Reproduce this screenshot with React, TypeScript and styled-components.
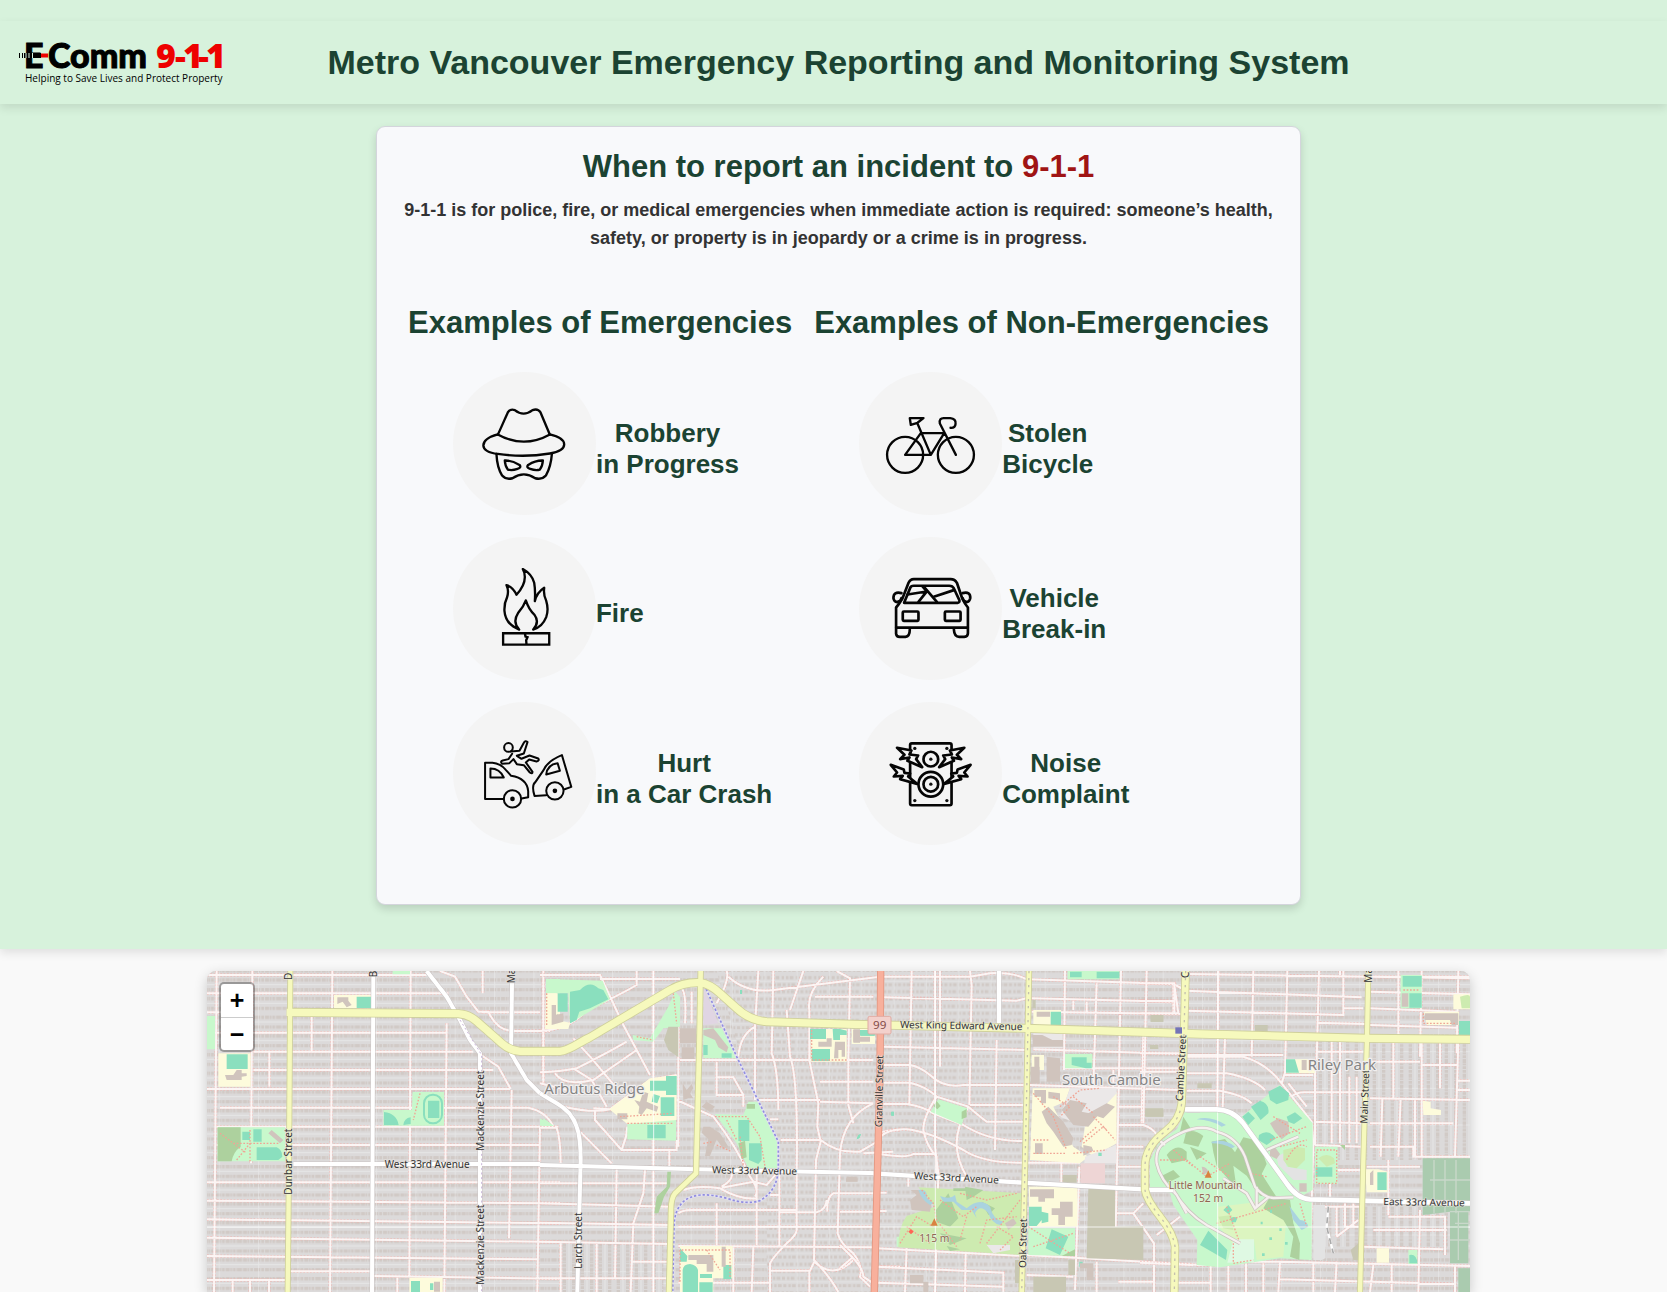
import React from "react";
import styled, { createGlobalStyle } from "styled-components";

const GlobalStyle = createGlobalStyle`
  * { box-sizing: border-box; }
  body {
    margin: 0;
    background: #f9f9f9;
    color: #333;
    font-family: "Liberation Sans", Arial, sans-serif;
  }
  h1, h2, p, ul { margin: 0; padding: 0; }
`;

const Page = styled.div`
  display: flex;
  flex-direction: column;
  height: 100vh;
  min-height: 1100px;
  overflow: hidden;
`;

const Hero = styled.div`
  padding: 21px 0 44px;
  background: #d7f2dc;
  box-shadow: 0 4px 9px rgba(0, 0, 0, 0.1);
`;

const Header = styled.header`
  display: grid;
  grid-template-columns: 230px 1fr 220px;
  align-items: center;
  height: 83px;
  box-shadow: 0 4px 9px rgba(0, 0, 0, 0.1);
`;

const LogoLink = styled.a`
  display: block;
  height: 48px;
  padding-left: 18px;
`;

const Title = styled.h1`
  padding-bottom: 2px;
  color: #1b4332;
  font-size: 34px;
  line-height: 40px;
  text-align: center;
`;

const CardArea = styled.div`
  padding-left: 10px;
`;

const Card = styled.section`
  width: 925px;
  max-width: calc(100% - 40px);
  margin: 22px auto 0;
  padding: 22px 20px 59px;
  border: 1px solid #d4d5dc;
  border-radius: 9px;
  background: #f8f9fb;
  box-shadow: 0 4px 9px rgba(0, 0, 0, 0.14);
`;

const Heading = styled.h2`
  color: #1b4332;
  font-size: 31px;
  line-height: 36px;
  text-align: center;
  white-space: nowrap;
`;

const Emphasis = styled.span`
  color: #a01414;
`;

const Lead = styled.p`
  margin-top: 11px;
  font-size: 18px;
  font-weight: bold;
  line-height: 28px;
  text-align: center;
`;

const Columns = styled.div`
  display: flex;
  flex-wrap: wrap;
  justify-content: center;
  gap: 22px;
  margin-top: 53px;
`;

const ExampleList = styled.ul`
  display: flex;
  flex-direction: column;
  gap: 22px;
  margin-top: 31px;
  padding-left: 45px;
  list-style: none;
`;

const ExampleItem = styled.li`
  display: flex;
  align-items: center;
`;

const IconCircle = styled.div`
  width: 143px;
  height: 143px;
  border-radius: 50%;
  background: #f4f4f4;
`;

const IconDrawing = styled.svg<{ $weight?: number }>`
  display: block;
  width: 100%;
  height: 100%;
  fill: none;
  stroke: #050505;
  stroke-width: ${({ $weight = 7 }) => $weight};
  stroke-linejoin: round;
  stroke-linecap: round;
`;

const ExampleLabel = styled.span`
  padding-top: 10px;
  color: #1b4332;
  font-size: 26px;
  font-weight: bold;
  line-height: 31px;
  text-align: center;
  white-space: pre-line;
`;

const MapFrame = styled.main`
  position: relative;
  flex: 1;
  min-height: 0;
  margin: 22px 197px 0 207px;
  border-radius: 9px 9px 0 0;
  background: #dddada;
  box-shadow: 0 4px 13px rgba(0, 0, 0, 0.2);
  overflow: hidden;
`;

const MapDrawing = styled.svg`
  display: block;
  width: 100%;
  height: 100%;
  fill: none;
`;

const ZoomControl = styled.div`
  position: absolute;
  top: 11px;
  left: 12px;
  display: flex;
  flex-direction: column;
  border: 2px solid rgba(0, 0, 0, 0.3);
  border-radius: 5px;
  background: #fff;
  background-clip: padding-box;
`;

const ZoomButton = styled.button`
  display: block;
  width: 32px;
  height: 33px;
  padding: 0;
  border: 0;
  background: transparent;
  color: #000;
  font: bold 25px/33px "Liberation Sans", Arial, sans-serif;
  & + & { border-top: 1px solid #ccc; }
`;

const Logo = () => (
  <svg width="212" height="48" viewBox="0 0 212 48" role="img" aria-label="E-Comm 9-1-1">
    <g fontFamily="Lato, sans-serif" fontWeight="900" fontSize="34">
      <text x="6" y="29" fill="#000" stroke="#000">E</text>
      <text x="30" y="29" fill="#000" stroke="#000">Comm</text>
    </g>
    <text x="138 157 165 180 188" y="29" fill="#ee0000" fontFamily="'Noto Sans', sans-serif" fontWeight="900" fontSize="34">9-1-1</text>
    <path d="M23 16.500h7" stroke="#ee0000" strokeWidth="4" />
    <path d="M1.500 14v5M4.500 14v5" stroke="#000" strokeWidth="1" />
    <path d="M6 16.500h17" stroke="#000" strokeWidth="5" />
    <path d="M8 14v5M11 14v5M14.500 14v5" stroke="#d7f2dc" strokeWidth="1" />
    <text x="7" y="43" fill="#000" fontFamily="'Open Sans', sans-serif" fontSize="10" fontWeight="500">
      Helping to Save Lives and Protect Property
    </text>
  </svg>
);

const RobberyIcon = () => (
  <IconDrawing viewBox="42 36 428 428">
    <path d="M176 224C184 207 197 177 206 157Q213 145 227 150Q253 171 280 150Q296 144 304 157L332 224" />
    <path d="M176 223C118 239 119 276 176 281Q253 293 332 280C390 270 388 236 332 223Q254 266 176 223" />
    <path d="M172 281Q174 322 189 346Q200 359 220 354Q254 331 288 354Q309 359 320 346Q335 320 338 281" />
    <path d="M197 301Q218 300 241 314Q248 322 235 326Q218 332 206 328Q198 318 197 301M311 301Q290 300 267 314Q260 322 273 326Q290 332 302 328Q310 318 311 301" />
  </IconDrawing>
);

const FireIcon = () => (
  <IconDrawing viewBox="42 531 428 428">
    <path d="M240 808Q199 792 196 752Q195 729 204 711Q210 692 202 675Q222 681 232 704Q257 677 257 651Q257 636 251 627Q278 642 285 668Q289 691 287 723Q293 697 315 683Q312 704 321 722Q329 748 321 771Q309 801 282 808Q302 786 286 764Q269 749 260 721Q253 741 237 758Q219 786 240 808" />
    <path d="M192 819h138v34H192zM257 819l2 10 6 2-4 9 1 13" strokeLinejoin="miter" />
  </IconDrawing>
);

const CrashIcon = () => (
  <IconDrawing viewBox="42 36 428 428" $weight={6}>
    <path d="M194 326H138V218H160Q184 220 200 239L216 257Q264 265 267 303V321L247 325" />
    <path d="M154 235Q182 235 194 262H154z" />
    <circle cx="220" cy="326" r="26" /><circle cx="220" cy="326" r="4" fill="#111" />
    <path d="M321 315L286 317Q276 285 289 275L313 240Q324 213 368 195L396 290L376 297" />
    <path d="M321 253Q324 223 355 219L362 242z" />
    <circle cx="347" cy="302" r="26" /><circle cx="347" cy="302" r="4" fill="#111" />
    <circle cx="208" cy="172" r="13" />
    <path d="M215 184L241 182 254 158Q258 150 265 156L254 190 233 197 247 206 271 196 297 205Q302 211 292 214L270 208 260 217 280 245Q280 253 272 247L254 225 233 222 223 207 211 219 189 221Q182 214 191 211L208 207 219 191" />
  </IconDrawing>
);

const BicycleIcon = () => (
  <IconDrawing viewBox="54 36 428 428">
    <circle cx="192" cy="284" r="54" /><circle cx="344" cy="284" r="54" />
    <path d="M192 284L239 219H309L269 284L229 190M192 284H269M344 284L296 190Q293 173 309 174H327Q345 176 343 191Q342 204 328 203M206 174H247L229 188 209 194z" />
  </IconDrawing>
);

const CarIcon = () => (
  <IconDrawing viewBox="54 531 428 428" $weight={8}>
    <path d="M165 802V742Q173 733 184 715L202 669Q207 657 218 657H328Q341 657 347 668L363 715Q370 730 380 742V802z" />
    <path d="M189 728L207 684Q209 677 218 677H324Q334 677 338 685L354 719Q357 727 349 728z" />
    <path d="M181 699Q157 693 157 714Q159 726 168 726Q180 723 181 714M364 699Q388 693 387 714Q385 726 376 726Q366 723 364 714" />
    <path d="M165 803V821Q166 830 176 830H193Q206 829 206 808M338 808Q339 830 354 830H369Q380 829 380 819V803" />
    <rect x="185" y="754" width="47" height="28" rx="3" /><rect x="311" y="754" width="47" height="28" rx="3" />
    <path d="M244 679L257 694 199 703M257 694L232 725M251 683L287 725M278 710L338 690" />
  </IconDrawing>
);

const NoiseIcon = () => (
  <IconDrawing viewBox="54 36 428 428" $weight={8}>
    <rect x="207" y="160" width="124" height="185" rx="5" />
    <g fill="#f4f4f4">
      <path d="M168 173L211 181 205 193 231 196 225 207 243 231 199 212 205 202 177 207 190 194zM369 173L326 181 332 193 306 196 312 207 294 231 338 212 332 202 360 207 347 194z" />
      <path d="M149 224L188 238 190 248 207 250 201 259 228 281 177 267 185 257 158 259 168 247zM388 224L349 238 347 248 330 250 336 259 309 281 360 267 352 257 379 259 369 247z" />
    </g>
    <g fill="#f4f4f4"><circle cx="269" cy="207" r="22" /><circle cx="269" cy="282" r="37" /><circle cx="269" cy="282" r="22" /></g>
    <g fill="#111" stroke="none"><circle cx="269" cy="207" r="5" /><circle cx="269" cy="282" r="5" /><circle cx="221" cy="175" r="5" /><circle cx="317" cy="175" r="5" /><circle cx="221" cy="331" r="5" /><circle cx="317" cy="331" r="5" /></g>
  </IconDrawing>
);

type Example = { label: string; Icon: () => React.JSX.Element };

const emergencies: Example[] = [
  { label: "Robbery\nin Progress", Icon: RobberyIcon },
  { label: "Fire", Icon: FireIcon },
  { label: "Hurt\nin a Car Crash", Icon: CrashIcon },
];

const nonEmergencies: Example[] = [
  { label: "Stolen\nBicycle", Icon: BicycleIcon },
  { label: "Vehicle\nBreak-in", Icon: CarIcon },
  { label: "Noise\nComplaint", Icon: NoiseIcon },
];

const Examples = ({ title, items }: { title: string; items: Example[] }) => (
  <div>
    <Heading>{title}</Heading>
    <ExampleList>
      {items.map(({ label, Icon }) => (
        <ExampleItem key={label}>
          <IconCircle><Icon /></IconCircle>
          <ExampleLabel>{label}</ExampleLabel>
        </ExampleItem>
      ))}
    </ExampleList>
  </div>
);

/* Map data: the city is split in four sheets, each placed by its own x offset. */
const sheets = [0, 1020, 1920, 2820];

const localRoads = [
  // Dunbar
  `M21 45H680M21 100H745M150 157H21M21 218H738M160 275H820M160 330H880M21 387H930M60 443H985Q1040 455 1060 500M50 500H1075M50 555H1020M21 667H1080M21 722L1080 730M21 778L1080 790M21 833L1080 846M21 888L1012 898M520 948L1080 956M21 960H263M270 934H516
   M50 33L42 996M157 33L153 610M208 275V380M397 33L390 996M335 170V275M632 33L628 950M740 190L733 996M848 33V100M1030 33V370M935 390L927 835M1020 500L1012 996M98 960V996M150 960V996M207 960V996M592 950V996
   M720 33L765 50 800 110 835 155H865Q890 210 935 213H1050M843 285L895 320 932 387M845 157H1020`,
  // Arbutus Ridge
  `M0 213Q90 208 140 150Q230 110 290 75V33M0 45H180L250 195 330 345M180 57H420M0 337Q60 335 110 325Q200 280 260 245M10 60V360M45 340Q70 380 160 360L290 270M100 235L155 295 230 385M100 325L155 360 200 440M160 445L210 448 330 360 410 345M120 400L0 370M70 440Q160 460 210 448M165 450V480L245 570H410V540M245 570L258 530 262 500M120 515L215 610M0 503H50Q62 540 62 610M415 200V560M425 85Q440 100 435 190M455 95V190M420 300H1000M410 420L520 470Q590 560 630 650Q660 690 645 710M340 33V996
   M388 570V620M230 625L225 955M315 630L310 700 280 790 272 996M0 730L390 740M0 670H390M0 788L390 795M0 845L390 852M0 955H390M62 845V996M170 850V996M275 905H390M430 690Q470 675 540 685Q600 720 650 715M545 680Q580 660 575 640M545 683L640 665 680 675 710 640M415 760Q430 748 460 750H770M415 800H1000M415 858L1000 862M530 730V855M580 860V996M640 860L635 996M415 968H690M650 640V855M690 996V910Q700 890 740 850Q770 825 770 810V640M718 640V860
   M530 305V405H610V440M530 352H580L610 405M655 33L645 200Q600 225 595 290M645 200V420M655 420H840M715 478H690M722 540H842Q890 580 960 575L1020 540M700 33L695 280Q715 330 715 450M740 150L750 290Q775 350 770 640M790 33L750 150M850 50Q800 100 808 150V300L835 430 832 500 842 545 828 600 822 900Q870 950 895 996M890 33L930 55 925 300V435L940 490M560 33Q570 60 530 130M565 50Q620 100 700 90L1020 50M825 110H1000M840 365H1000M840 425L1000 430M1000 430Q910 470 900 580L893 820Q900 850 940 880Q970 920 960 950L990 980M690 932H810L823 905Q880 960 940 900M862 755Q860 710 880 700H1000M718 705H690M720 757H830Q858 750 860 720M900 755H1000M970 580L1060 575M1015 520Q1040 510 1080 510M1013 920H1080M808 932V996`,
  // Shaughnessy and South Cambie
  `M130 50H390L450 40Q520 35 565 60M130 112L530 122 565 113M565 58L1000 72 1035 90M575 115L1000 125M575 155L1035 162M215 33L208 435M285 33V560L295 640 285 996M390 33L395 75 388 435M300 33V320M470 240L465 570M675 33L672 330M770 70L760 380M843 33L835 440 825 900M1000 70V160M910 215L905 490
   M130 260L560 270M130 315H210Q240 320 270 345Q310 385 370 375H560M130 368H210Q260 380 290 410L385 440Q420 470 440 485H550M130 432H200Q250 440 280 460L370 495Q450 545 550 543M390 435H550M120 530Q150 505 200 508Q270 515 370 570Q430 610 550 608M120 582Q200 595 220 582H285M290 410Q250 470 250 510Q260 560 290 590V650M385 440Q350 500 350 550Q350 600 380 650M205 650V680
   M580 268L1020 282M670 325H1020M570 375L1020 390M835 440H905M835 495H910Q940 505 950 525M835 560H910M830 620H910M560 608H720M718 620L705 990M664 610V668M115 698H140M110 753H140M110 865L550 888M110 920L490 938V996M110 968L490 980M200 865L195 996M377 880L375 996M560 885L1080 915M560 945L700 950M880 760L910 730M880 760L942 850V996M830 760H880M770 905V996M0 855L45 900Q70 930 70 950L100 970M0 925L40 890M835 965H940M700 120V150M740 125V155M820 330V385M950 825L1020 770`,
  // Riley Park
  `M20 33L10 490M140 42L990 55M135 92L665 112M135 152L610 165V33M0 70H103V160M0 123H103M0 160H115L103 75M235 33L232 445M340 33L335 290M442 33L435 340M537 33L530 300M690 50H990M690 95L990 103M610 145H670M690 145L950 155M530 188L675 192M775 33V225M845 33L840 290M955 33L950 280M690 195L950 203
   M0 280H125M0 335H120M140 285H430M140 290H310Q380 310 425 370M140 340H260Q340 355 375 390M140 392H240Q310 405 335 430M232 440V392M255 235L248 445M425 370Q440 320 450 300M430 345L520 345M425 370L515 485 520 550 510 900M455 410Q470 395 500 397H670M445 370L500 440M525 300V555M525 485L665 490M525 555L665 560M530 275H670M575 240V550M600 240V550M628 350V550M650 350V550M600 33V45M690 305H840M760 240V415M690 415L990 420M727 415L722 590M782 415L775 590M825 420V590M845 240V590M900 240V385M955 240L945 590M845 315H950M950 362H990M950 390H990M690 490L940 490M690 560H820V590H990M680 620H840M745 600V765M745 770H915V885M700 810H920M670 860L910 868M0 908L160 915M170 915H240L320 905 420 905 990 918M520 905V996M590 905L585 996M420 905L415 996M318 910V996M370 910V996M265 915V996M212 915V996M110 968H215M420 958L945 972M700 915L690 996M755 915V996M840 750L835 996M945 920V996M590 830L655 780M590 830V740M640 730V800M615 730V800H660M570 560V710M525 740H660M590 630H665`,
];

const whiteRoads = [
  { w: 12, d: "M680 33L740 110 780 180 810 240 840 280V996M520 45L516 996M936 70L933 280 980 360 1020 400M280 612H1020" },
  { w: 12, d: "M0 400L50 430Q95 455 110 500Q122 530 122 600L112 996M0 615L470 628 1022 640" },
  { w: 13, d: "M100 640L550 668 910 688M477 33V190M1040 450H1080" },
  { w: 14, d: "M135 448H230Q280 450 310 490L440 670Q470 715 510 718L990 730M25 690H100" },
];

const yellowRoads = [
  { w: 13, d: "M271 33L267 610 263 996" },
  { w: 22, d: "M260 157L520 159 775 161C815 163 830 185 860 210L905 250Q930 272 960 274H1080C1110 272 1140 245 1170 232L1410 90Q1450 66 1500 68Q1530 72 1560 100L1610 145Q1650 182 1700 185L1960 193 2480 205 3000 222 3500 235 3810 238" },
  { w: 14, d: "M1502 33L1498 250 1488 640 1425 700Q1413 715 1413 750L1407 996" },
  { w: 14, d: "M2487 33L2480 400 2473 700 2465 996" },
  { w: 20, d: "M2957 33L2952 220 2945 430Q2940 480 2895 515Q2835 560 2835 620V690Q2840 720 2880 770Q2920 820 2925 860L2923 996" },
  { w: 13, d: "M3505 33L3501 235 3490 600 3480 996" },
];

type Area = { fill: string; d: string };

const PARK = "#c8f8cc";
const PITCH = "#8adfbe";
const SCHOOL = "#fdfbdc";
const BUILDING = "#d0c4bd";
const WOOD = "#add19e";
const GRASS = "#cdebb0";
const RETAIL = "#c8c7b3";

const areas: Area[][] = [
  [
    { fill: PARK, d: "M21 168h24v100h-24zM53 502H255V604H53zM638 396H732V497H550V450H636zM578 33h52v10h-52zM1030 475L1062 498H1028zM1038 57H1080V100H1038z" },
    { fill: SCHOOL, d: "M55 280H152V380H55zM402 105H515V145H402zM628 953H728V996H628zM1038 100H1080V208H1035z" },
    { fill: WOOD, d: "M53 502H122V560Q100 575 95 604H53z" },
    { fill: PITCH, d: "M80 283H143V327H80zM470 110H515V144H470zM127 515H150V540H127zM160 508H185V545H160zM170 562H230Q247 570 247 590L235 600H170zM552 456Q590 460 596 495H552zM610 495Q612 475 632 472V492zM684 422H718V474H684zM633 963H660V996H633zM690 970h10v20h-10z" },
    { fill: BUILDING, d: "M412 112H445V122L455 135 440 142 428 125 412 132zM75 345H100L110 330H125V340H140V348L125 350V360H80zM205 520L215 510 250 540 240 550zM702 965h18v30h-18zM1042 130H1055L1060 160 1080 165V190H1045z" },
  ],
  [
    { fill: PARK, d: "M20 57L188 62 210 118 90 190 85 100H20zM385 140L405 95 420 110V200L370 205 340 245 280 240 278 225 330 235zM262 490L408 475V542L262 538zM490 205H545L592 295H490zM525 462L610 465 625 425H655L715 545V625H625L590 550zM0 475L38 497H0zM1070 830h10v30h-10z" },
    { fill: "#e0d5e3", d: "M490 80L535 190 490 195z" },
    { fill: SCHOOL, d: "M20 100H50V180L90 188 85 207H20zM208 448L330 355 410 345V480L262 492zM420 858H578V955H520V996H420zM812 207H920V305H812zM935 207H1005V252H935z" },
    { fill: PITCH, d: "M53 100H83V155H53zM90 95L120 90Q150 60 175 85L190 90 205 118 150 145 118 155 110 180 90 190zM330 362H378V348H410V405H378V392H330zM362 412H403V468H362zM322 495H377V535H322zM595 480H628V543H595zM627 550H665V600L655 612 627 600zM810 207H858V237H810zM878 207H900L920 212V225H900V240H880zM815 267H870V303H815zM960 210h45v17h-45zM420 865L442 888 440 905H420zM428 930Q430 912 450 912Q470 915 474 930V996H428zM478 967H518V996H478zM550 915h24v42h-24zM480 942h36v12h-36zM545 280h30v13h-30zM490 255h13v30h-13zM340 402L360 408 352 430 335 425zM600 90h6v12h-6zM955 525l8-3-5 12-8 4zM1056 455h6v12h-6z" },
    { fill: BUILDING, d: "M35 135H48V165L70 160V185L35 195zM420 205H468V250H420zM425 262h38v35h-38zM490 210L520 205 565 262 560 277 535 262 525 240 490 225zM283 420L300 425 310 395 325 400 320 425 355 440 350 455 320 445 305 465 295 460 298 440zM445 885H520V935H500V912H470V900H445zM545 860h12v60h-12zM835 245H860V235H875V260H835zM885 245H915V290H905V270H895V295H882zM940 210h15v35h-15zM960 230h30v15h-30zM485 440L500 425 525 440 510 455zM428 370L440 390 455 372 460 385 450 400 460 415 445 415 430 420zM490 500h20l30 20 25 40-15 8-20-30-20 50h-15l10-50-20-20zM920 650h30v14h-30zM232 460h30v18h-30z" },
    { fill: RETAIL, d: "M385 200H415V292L385 270 372 240z" },
    { fill: WOOD, d: "M382 635H393L390 680 372 710 355 760H343L350 710 380 680zM620 432h25v14h-25zM595 550l20-8 5 50-15 5z" },
  ],
  [
    { fill: PARK, d: "M295 418L382 445 365 495 272 455zM675 282H757V325H675zM565 805H705V888L565 885zM683 33H838V58H683z" },
    { fill: PARK, d: "M1035 455H1080V850L1060 780 1000 700 930 680 935 600 970 540 1010 510z" },
    { fill: GRASS, d: "M235 682L545 700V885L175 862Q175 800 200 768L285 740z" },
    { fill: SCHOOL, d: "M580 150H663V195H580zM575 285H612V330H575zM578 385H690L675 425 640 440 700 560 745 590 720 610 570 600zM735 500L810 400 830 395V550L760 590 725 560zM567 680H712V800H567z" },
    { fill: "#ebe8e8", d: "M690 385H830V400L735 500 660 470zM735 590L828 555V610H735zM580 220H668V265H580zM440 855H510V870L460 880z" },
    { fill: "#eed5d5", d: "M722 610H795V670H722z" },
    { fill: RETAIL, d: "M745 685L825 690V800L910 798V900L740 895zM580 950H678V996H580zM915 445H970V470H920zM932 165H970V185H932zM668 645H710V668H668zM685 900H705V945H685zM577 120h10v25h-10zM525 900h20v70h-20z" },
    { fill: PITCH, d: "M632 155H663V195H632zM695 292H740V308H755V325H738L695 315zM567 740H605V780L590 798H567zM605 755L625 760V785L605 790zM635 808L685 830 660 885 617 865zM690 35H725V52H690zM770 35H838V55H770zM0 212h18v12H0zM62 210h40v17H62zM153 455h8v12h-8zM55 525l8-3-5 12-8 4zM718 905h10v15h-10zM775 578h10v10h-10z" },
    { fill: BUILDING, d: "M605 455L625 440 655 470 670 485 700 535 695 555 670 560 640 515 620 490zM665 450L690 420 740 430 725 455 775 465 745 500 700 495zM745 460L800 430 825 440 790 475zM585 550h23v32h-23zM570 688H642V715H615V725H595V710H570zM660 725H698V770H675V795H655V765H635V745H660zM577 225h30l30 15h32v20h-90zM620 290L660 295V365H620zM572 320h27v50h-27zM583 390h35v40h-15v-20h-20zM625 395l35 5v20l-35-5zM590 155h40v15h-40zM583 290h15v30h-15zM212 690H235L275 725 270 755 215 750 210 720 230 705zM210 945H250V965H265V996H250V970H210zM720 910H760V960H740V925H720zM495 790L520 775 530 790 505 810zM40 208h20v40H40zM18 655h35v10H18zM730 555l25 5 5 12-30 15z" },
    { fill: WOOD, d: "M288 750L325 700 355 775 330 800 290 785zM375 680L430 690 400 710 380 720zM340 685h40v8h-40zM300 820l80 15-50 20zM425 725l40 20-20 20zM1030 520Q1060 500 1080 520V560L1050 550zM1000 590Q1040 560 1070 590L1040 605 1010 600zM955 640l45-20 25 20-35 15zM1060 610l20 15v50l-15-20zM365 455l15-8v25l-15 5zM280 438l10-15 12 15-10 10zM665 888l40-20v20zM320 858l40 10-30 5z" },
    { fill: "#aad3df", d: "M235 690Q265 685 260 715L280 730 270 735Q245 720 235 690zM300 708Q330 720 345 705L350 725 380 745Q420 710 450 740Q460 780 490 785L480 795Q455 790 445 760Q420 730 405 760L410 775 395 750 365 750 340 725 310 725z" },
  ],
  [
    { fill: PARK, d: "M138 455H230Q285 460 310 500L425 655Q460 710 515 725V900L420 895 240 922 170 915 172 840 100 735 90 700 30 685 30 600 60 545 120 500zM418 375L505 475 518 490V690L490 705 440 660 305 470zM525 560H593V672H525zM782 45H845V145H782zM805 870H832V912H805z" },
    { fill: SCHOOL, d: "M438 298H525V340H438zM848 422L872 425V445L903 450V465H850zM675 628H715L743 635V697H680zM710 865H747V908H710zM852 155H957V195H860zM940 103h50v45h-50z" },
    { fill: "#dcf5c0", d: "M235 740L400 720 440 760 430 890 350 900 342 840 280 855 230 790z" },
    { fill: "#dff9e3", d: "M280 838H342V905L262 908z" },
    { fill: "#e3e3e3", d: "M410 590L430 580 440 620 500 630V660L460 660 415 615zM520 735H555V895L545 900H520z" },
    { fill: WOOD, d: "M138 518Q160 505 190 528L175 560 130 550zM80 585Q110 545 140 575L140 600 95 610zM150 560l50 20-30 20zM215 545l40-8 30 40 25-45 45 10 25 70-15 30 45 70-50-5-40-60-40-30 10 70-60-70-10-40zM390 710L450 720 460 790 480 850 478 900 450 890 460 830 430 780 370 745zM60 650l40-20 20 20-40 20zM130 470l25 40-35 5zM600 555l15 0v15z" },
    { fill: "#aacbaf", d: "M848 595H990V755H985V910H930V755L848 765zM955 925H990V996H955z" },
    { fill: GRASS, d: "M430 570L470 560 495 565 495 600 470 625 445 620 430 600zM535 595Q560 575 582 595L585 610 560 620zM960 110Q990 100 990 110V145H965zM235 770l40-5 5 45-30-5z" },
    { fill: PITCH, d: "M385 395L420 377 447 400 445 420 410 433 390 420zM333 440L360 422Q390 430 385 460L362 480zM307 470L325 455 345 475 325 495zM440 470L465 457 487 475 462 492 445 485zM357 525Q385 505 408 535L380 555 355 540zM527 622H577V650H527zM712 637H740V690H712zM788 48H845V80H788zM808 100H845V143H808zM957 183H990V230H957zM438 298H465L477 338H438zM808 885Q830 880 832 910H808zM250 750l15-15 12 15-12 12zM205 812L262 870 258 900 180 855zM272 775q10-8 20 0l-5 12h-12zM390 750h6v8h-6zM362 785h6v8h-6zM418 805h7v8h-7zM388 832h8v8h-8zM435 846h8v8h-8zM366 880h8v8h-8z" },
    { fill: "#aad3df", d: "M170 478Q210 465 258 495L245 500Q215 480 170 478zM215 545Q255 535 285 560L275 565Q250 550 215 550zM448 738L480 780Q500 780 505 800L485 810 460 780z" },
    { fill: BUILDING, d: "M390 490L415 475 445 485 448 520 425 538 405 515zM390 572l15-10 15 20-10 15-20-10zM478 670h22v25h-22zM485 300h15v30h-15zM785 100h20v40h-20zM690 640l10-10v45h-10zM855 160h100v35h-20l-5-15h-75zM185 620q15 0 20 15l-15 10z" },
    { fill: RETAIL, d: "M15 450H70V470H15zM172 370H215V385H172zM32 165H70V185H32zM345 195h38v20h-38zM632 870L655 850V900H640zM30 255h25v12H30z" },
  ],
];

const footpaths = [
  "M60 520L140 580M150 510V604M100 550H240M110 600L150 550M660 400L640 480",
  "M20 100V200M400 100L410 190M290 230L340 240M240 470L400 460M262 490H400M525 470H620L660 530 675 620M560 480L590 540M600 530L610 620M420 965V870H570V950M500 870L540 930M530 555L575 575M490 550L520 545M815 210V300H920",
  "M245 690L280 730 290 780 350 860M180 850L230 770 280 800M300 720L370 770 410 740M360 700L440 720 530 700M420 850L440 780 530 770M470 800L520 830 480 870M380 770L360 840M200 800L270 850M540 720L440 850M580 400L640 470 680 570M660 440L720 390 780 385M640 410L690 440 660 470M730 550L790 500 825 540M700 580L800 570M580 580H680M760 470L800 510M565 800L690 880M580 860L700 820M720 545L770 500M700 410L760 460M580 540H625",
  "M60 600L140 600 200 650 270 610M100 570L160 620M180 590L270 650M390 540L500 500M400 470L480 520M260 740L300 850M230 790L440 730M380 650L330 640M420 560L500 540M530 570H590V670H530zM850 160V190H950M790 90H840M280 850V910L340 900M480 730L500 800M440 600Q470 540 500 560",
];

const rails = "M1513 75L1610 290 1735 545V620Q1735 690 1680 722Q1640 735 1580 715Q1490 690 1450 725Q1423 750 1422 800L1418 996";
const granville = "M2042 33L2040 340 2023 996";
const parkDrives = "M100 690Q140 760 200 795L300 850M70 550Q170 480 230 515Q290 530 315 590L345 680Q370 712 400 714L460 712M70 550Q45 570 50 610Q60 660 110 705L140 760M350 680V740M385 712L345 745 320 700 250 655M380 570L475 530M60 543L75 555";

const MapSheet = ({ x, index }: { x: number; index: number }) => (
  <g transform={`translate(${x} 0)`}>
    <path d={localRoads[index]} stroke="#f0b5b0" strokeWidth="10" strokeDasharray="5 5" opacity="0.8" />
    <path d={localRoads[index]} stroke="#fcf5f4" strokeWidth="6" />
    {areas[index].map((area, i) => <path key={i} d={area.d} fill={area.fill} />)}
    <path d={footpaths[index]} stroke="#f0a595" strokeWidth="4" strokeDasharray="5 5" />
  </g>
);

const streetLabels = [
  { t: "Dunbar Street", x: 275, y: 704, r: -90 },
  { t: "D", x: 277, y: 60, r: -90 },
  { t: "B", x: 531, y: 52, r: -90 },
  { t: "Ma", x: 945, y: 70, r: -90 },
  { t: "Mackenzie Street", x: 853, y: 572, r: -90 },
  { t: "Mackenzie Street", x: 852, y: 974, r: -90 },
  { t: "West 33rd Avenue", x: 554, y: 624, r: 0 },
  { t: "Larch Street", x: 1147, y: 926, r: -90 },
  { t: "West 33rd Avenue", x: 1536, y: 640, r: 1 },
  { t: "Granville Street", x: 2046, y: 502, r: -89 },
  { t: "West King Edward Avenue", x: 2100, y: 204, r: 1 },
  { t: "West 33rd Avenue", x: 2141, y: 657, r: 3 },
  { t: "Oak Street", x: 2478, y: 924, r: -89 },
  { t: "Cambie Street", x: 2948, y: 424, r: -87 },
  { t: "C", x: 2967, y: 54, r: -90 },
  { t: "Ma", x: 3515, y: 68, r: -90 },
  { t: "Main Street", x: 3502, y: 491, r: -88 },
  { t: "East 33rd Avenue", x: 3550, y: 735, r: 1 },
];

const districts = [
  { t: "Arbutus Ridge", x: 1033, y: 402 },
  { t: "South Cambie", x: 2586, y: 375 },
  { t: "Riley Park", x: 3323, y: 330 },
];

const CityMap = () => (
  <MapDrawing viewBox="21 33 3789 963" preserveAspectRatio="xMidYMin slice" role="img" aria-label="Street map of Vancouver">
    <defs>
      <pattern id="rows" x="0" y="46" width="118" height="56" patternUnits="userSpaceOnUse">
        <path d="M0 28H118M58 0V56" stroke="#e6e6e6" strokeWidth="3" />
        <path d="M0 14H118M0 43H118" stroke="#cdc4bf" strokeWidth="10" strokeDasharray="8 3 12 2 5 3" opacity="0.75" />
      </pattern>
      <pattern id="columns" x="0" y="0" width="54" height="110" patternUnits="userSpaceOnUse">
        <path d="M27 0V110M0 55H54" stroke="#e6e6e6" strokeWidth="3" />
        <path d="M13 0V110M41 0V110" stroke="#cdc4bf" strokeWidth="10" strokeDasharray="8 3 12 2 5 3" opacity="0.75" />
      </pattern>
      <pattern id="houses" width="97" height="86" patternUnits="userSpaceOnUse">
        <path d="M0 9H97M4 31H97M-3 53H97M2 74H97" stroke="#cdc4bf" strokeWidth="9" strokeDasharray="9 6 7 4 11 7 6 5" opacity="0.75" />
        <path d="M0 20H97M0 64H97M46 0V86" stroke="#e6e6e6" strokeWidth="2" />
      </pattern>
    </defs>
    <path d="M0 0H3830V1000H0z" fill="#dcdada" />
    <path d="M0 0H3830V1000H0z" fill="url(#rows)" />
    <path d="M1550 33H2480V996H1700V560z" fill="#dcdada" />
    <path d="M1550 33H2480V996H1700V560z" fill="url(#houses)" />
    <path d="M3345 240H3810V600H3345zM3345 740H3750V860H3345zM1080 850H1390V996H1080z" fill="#dcdada" />
    <path d="M3345 240H3810V600H3345zM3345 740H3750V860H3345zM1080 850H1390V996H1080z" fill="url(#columns)" />
    {sheets.map((x, index) => <MapSheet key={x} x={x} index={index} />)}
    <path d={parkDrives} transform="translate(2820 0)" stroke="#c9c2be" strokeWidth="11" />
    <path d={parkDrives} transform="translate(2820 0)" stroke="#f6f0ef" strokeWidth="7" />
    <path d="M21 801H3810M1361 33V996M2206 33V996M3053 33V996" stroke="#fff" strokeWidth="3" opacity="0.8" />
    <rect x="672" y="404" width="54" height="86" rx="26" stroke={PITCH} strokeWidth="6" />
    <path d="M3702 600V760M3735 600V760M3768 600V760M3690 660H3810M3750 755H3810M3765 790H3810M3750 840H3810M3775 755V900" stroke="#c9d8ca" strokeWidth="4" />
    <path d="M3385 740L3380 800 3400 880" stroke="#fff" strokeWidth="7" />
    <path d="M3385 740L3380 800 3400 880" stroke="#aaa" strokeWidth="5" strokeDasharray="18 14" />
    {whiteRoads.map((road, i) => (
      <g key={i} transform={`translate(${sheets[i]} 0)`}>
        <path d={road.d} stroke="#c9c4c4" strokeWidth={road.w + 3} />
        <path d={road.d} stroke="#fff" strokeWidth={road.w} />
      </g>
    ))}
    <path d="M780 180L845 285V996" stroke="#c9b5d9" strokeWidth="3" strokeDasharray="6 8" />
    <path d={rails} stroke="#e4e2ef" strokeWidth="8" />
    <path d={rails} stroke="#918de0" strokeWidth="5" strokeDasharray="7 6" />
    {yellowRoads.map((road, i) => <path key={i} d={road.d} stroke="#cfd09b" strokeWidth={road.w + 5} />)}
    {yellowRoads.map((road, i) => <path key={i} d={road.d} stroke="#f6f9bd" strokeWidth={road.w} />)}
    <path d={`${yellowRoads[3].d}${yellowRoads[4].d}`} stroke="#c4c0ae" strokeWidth="4" strokeDasharray="7 14" />
    <path d={granville} stroke="#e29680" strokeWidth="22" />
    <path d={granville} stroke="#f8b09c" strokeWidth="17" />
    <rect x="2004" y="169" width="69" height="53" rx="5" fill="#f3d1cc" stroke="#e0aba3" strokeWidth="3" />
    <rect x="2926" y="202" width="20" height="19" fill="#7474b8" />
    <path d="M2192 797l11-22 10 22zM3014 653l11-22 10 22z" fill="#d98240" />
    <path d="M2125 815l8-8 8 8-8 8z" fill="#ff6655" />
    <g fontFamily="'Noto Sans', sans-serif" strokeLinejoin="round" paintOrder="stroke">
      <g fill="#333" stroke="#e8e5df" strokeWidth="5" strokeOpacity="0.6" fontSize="30">
        {streetLabels.map(({ t, x, y, r }) => (
          <text key={`${x}-${y}`} transform={`translate(${x} ${y}) rotate(${r})`}>{t}</text>
        ))}
      </g>
      <g fill="#858585" stroke="#f1efef" strokeWidth="7" fontSize="45">
        {districts.map(({ t, x, y }) => <text key={t} x={x} y={y}>{t}</text>)}
      </g>
      <g fill="#8f6652" stroke="#e6f3dc" strokeWidth="4" strokeOpacity="0.8" fontSize="31">
        <text x="2906" y="687">Little Mountain</text>
        <text x="2979" y="725">152 m</text>
        <text x="2158" y="847">115 m</text>
      </g>
      <text x="2019" y="207" fill="#834c48" fontSize="35">99</text>
    </g>
  </MapDrawing>
);

export default function App() {
  return (
    <Page>
      <GlobalStyle />
      <Hero>
        <Header>
          <LogoLink href="#" aria-label="E-Comm 9-1-1 home"><Logo /></LogoLink>
          <Title>Metro Vancouver Emergency Reporting and Monitoring System</Title>
        </Header>
        <CardArea>
          <Card>
            <Heading>When to report an incident to <Emphasis>9-1-1</Emphasis></Heading>
            <Lead>
              9-1-1 is for police, fire, or medical emergencies when immediate action is required: someone’s health,
              safety, or property is in jeopardy or a crime is in progress.
            </Lead>
            <Columns>
              <Examples title="Examples of Emergencies" items={emergencies} />
              <Examples title="Examples of Non-Emergencies" items={nonEmergencies} />
            </Columns>
          </Card>
        </CardArea>
      </Hero>
      <MapFrame>
        <CityMap />
        <ZoomControl>
          <ZoomButton type="button" aria-label="Zoom in">+</ZoomButton>
          <ZoomButton type="button" aria-label="Zoom out">−</ZoomButton>
        </ZoomControl>
      </MapFrame>
    </Page>
  );
}
